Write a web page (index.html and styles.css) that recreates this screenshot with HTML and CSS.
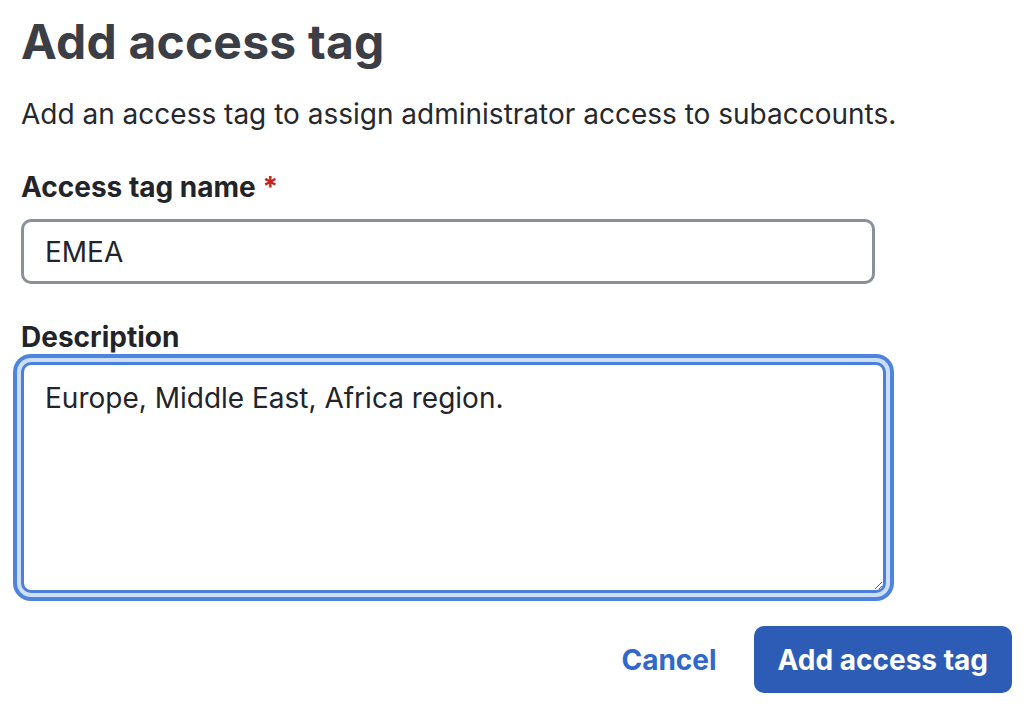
FILE: index.html
```html
<!DOCTYPE html>
<html lang="en">
<head>
<meta charset="utf-8">
<title>Add access tag</title>
<link rel="stylesheet" href="styles.css">
</head>
<body>
<main class="dialog">
  <h1 class="title">Add access tag</h1>
  <p class="subtitle">Add an access tag to assign administrator access to subaccounts.</p>
  <form class="form">
    <div class="field">
      <label class="label" for="tagname">Access tag name <span class="req">*</span></label>
      <input class="input" id="tagname" type="text" value="EMEA">
    </div>
    <div class="field field-desc">
      <label class="label" for="desc">Description</label>
      <textarea class="textarea" id="desc">Europe, Middle East, Africa region.</textarea>
    </div>
    <div class="actions">
      <button type="button" class="btn-link">Cancel</button>
      <button type="button" class="btn-primary">Add access tag</button>
    </div>
  </form>
</main>
</body>
</html>
```
FILE: styles.css
```css
* { box-sizing: border-box; }
html, body { margin: 0; background: #ffffff; }
body {
  font-family: Inter, "Noto Sans", "Liberation Sans", sans-serif;
  color: #222429;
}
.dialog {
  padding: 14px 14px 0 21px;
}
.title {
  margin: 0;
  font-size: 48px;
  line-height: 56px;
  font-weight: 700;
  color: #3b3e44;
  letter-spacing: 0.2px;
}
.subtitle {
  margin: 26px 0 0;
  font-size: 28px;
  line-height: 36px;
  color: #26282d;
}
.form { margin-top: 37px; }
.field { display: flex; flex-direction: column; align-items: flex-start; }
.label {
  font-size: 28px;
  line-height: 36px;
  font-weight: 700;
  color: #222429;
  margin-bottom: 14px;
}
.req { color: #c5221f; }
.input {
  width: 854px;
  height: 65px;
  border: 3px solid #8a9098;
  border-radius: 10px;
  padding: 0 21px;
  font-family: inherit;
  font-size: 28px;
  color: #222429;
  background: #fff;
  outline: none;
}
.field-desc { margin-top: 35px; }
.field-desc .label { margin-bottom: 7px; }
.textarea {
  width: 865px;
  height: 231px;
  border: 3px solid #4b7fdc;
  border-radius: 10px;
  padding: 15px 21px;
  font-family: inherit;
  font-size: 28px;
  line-height: 36px;
  color: #222429;
  background: #fff;
  outline: none;
  box-shadow: 0 0 0 4px #cddff8, 0 0 0 8px #4f84dc;
  resize: both;
}
.actions {
  display: flex;
  justify-content: flex-end;
  align-items: center;
  gap: 37px;
  margin-top: 33px;
}
.btn-link {
  border: none;
  background: none;
  padding: 0;
  font-family: inherit;
  font-size: 28px;
  font-weight: 700;
  color: #3068cc;
  cursor: pointer;
}
.btn-primary {
  height: 67px;
  padding: 0 24px;
  border: none;
  border-radius: 10px;
  background: #2c5cb6;
  color: #ffffff;
  font-family: inherit;
  font-size: 28px;
  font-weight: 700;
  cursor: pointer;
}
```
